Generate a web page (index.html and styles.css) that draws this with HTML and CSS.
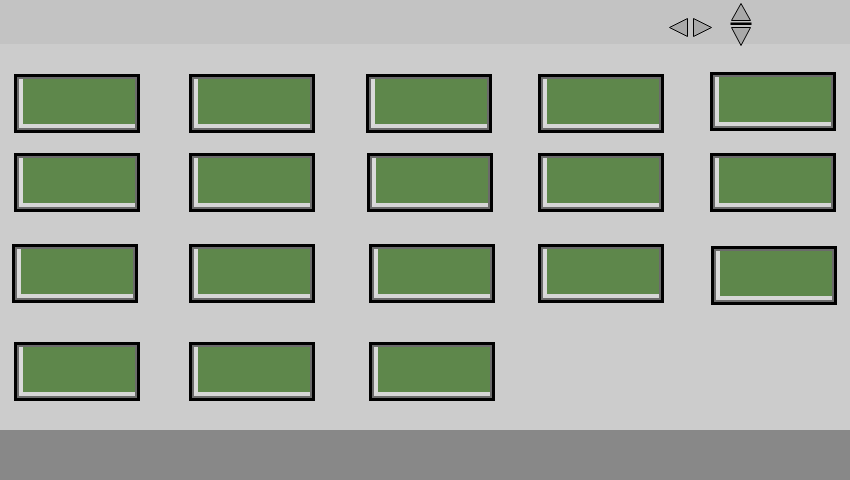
FILE: index.html
```html
<!DOCTYPE html>
<html lang="en">
<head>
    <meta charset="UTF-8">
    <title>Tiles</title>
    <link rel="stylesheet" href="styles.css">
</head>
<body>
<div class="topbar">
    <svg class="hnav" width="46" height="22" viewBox="0 0 46 22">
        <polygon points="1.5,10.5 19.5,1.5 19.5,19.5"/>
        <polygon points="25.5,1.5 43.5,10.5 25.5,19.5"/>
    </svg>
    <svg class="vnav" width="22" height="46" viewBox="0 0 22 46">
        <polygon points="11,1.5 20.5,18.5 1.5,18.5"/>
        <rect class="bar" x="0.5" y="20.5" width="21" height="2.5"/>
        <polygon points="1.5,25.5 20.5,25.5 11,43.5"/>
    </svg>
</div>
<div class="board">
    <div class="tile"><div class="face"></div></div>
    <div class="tile"><div class="face"></div></div>
    <div class="tile"><div class="face"></div></div>
    <div class="tile"><div class="face"></div></div>
    <div class="tile up2"><div class="face"></div></div>

    <div class="tile"><div class="face"></div></div>
    <div class="tile"><div class="face"></div></div>
    <div class="tile right1"><div class="face"></div></div>
    <div class="tile"><div class="face"></div></div>
    <div class="tile"><div class="face"></div></div>

    <div class="tile left2"><div class="face"></div></div>
    <div class="tile"><div class="face"></div></div>
    <div class="tile right3"><div class="face"></div></div>
    <div class="tile"><div class="face"></div></div>
    <div class="tile right1 down2"><div class="face"></div></div>

    <div class="tile"><div class="face"></div></div>
    <div class="tile"><div class="face"></div></div>
    <div class="tile right3"><div class="face"></div></div>
</div>
<div class="footer"></div>
</body>
</html>
```

FILE: styles.css
```css
html,body{
    margin:0;
    padding:0;
}
body{
    width:850px;
    height:480px;
    background:#cccccc;
    overflow:hidden;
}
.topbar{
    height:44px;
    background:#c3c3c3;
    display:flex;
    align-items:flex-start;
    justify-content:flex-end;
    gap:16px;
    padding-right:98px;
    box-sizing:border-box;
    position:relative;
    z-index:1;
}
.topbar svg{
    overflow:visible;
}
.topbar polygon{
    fill:#a9a9a9;
    stroke:#000;
    stroke-width:1;
}
.topbar .bar{
    fill:#000;
}
.hnav{
    margin-top:17px;
}
.vnav{
    margin-top:2px;
}
.board{
    height:386px;
    box-sizing:border-box;
    padding:30px 0 0 14px;
    display:grid;
    grid-template-columns:175px 177px 172px 172px 126px;
    grid-template-rows:79px 91px 98px 59px;
}
.tile{
    width:126px;
    height:59px;
    box-sizing:border-box;
    border:3px solid #000;
    padding:2px;
    background:#6b6b6b;
    position:relative;
}
.face{
    height:100%;
    box-sizing:border-box;
    border-left:4px solid #dadada;
    border-bottom:4px solid #d6d6d6;
    background:#5e874b;
}
.up2{ top:-2px; }
.down2{ top:2px; }
.left2{ left:-2px; }
.right1{ left:1px; }
.right3{ left:3px; }
.footer{
    height:50px;
    background:#888888;
}
```
